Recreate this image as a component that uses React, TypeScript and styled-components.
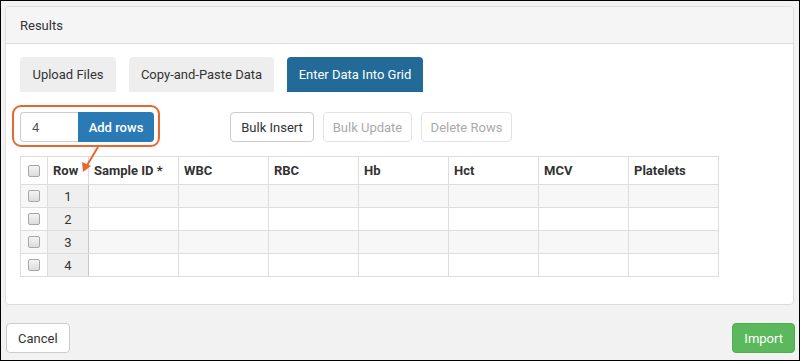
import styled, { createGlobalStyle } from 'styled-components';

const GlobalStyle = createGlobalStyle`
  html, body {
    margin: 0;
    padding: 0;
    background: #fff;
  }
  * {
    box-sizing: border-box;
  }
`;

const Frame = styled.div`
  width: 800px;
  height: 361px;
  border: 1px solid #000;
  background: #f2f2f2;
  padding: 5px 5px 0 4px;
  font-family: Roboto, 'Liberation Sans', sans-serif;
  font-size: 13px;
  color: #333;
  display: flex;
  flex-direction: column;
`;

const Panel = styled.div`
  width: 789px;
  height: 299px;
  background: #fff;
  border: 1px solid #ddd;
  border-radius: 4px;
  display: flex;
  flex-direction: column;
`;

const PanelHeader = styled.div`
  height: 37px;
  flex-shrink: 0;
  background: #f5f5f5;
  border-bottom: 1px solid #ddd;
  border-radius: 4px 4px 0 0;
  padding: 0 14px;
  display: flex;
  align-items: center;
`;

const PanelBody = styled.div`
  padding: 13px 14px 0;
  display: flex;
  flex-direction: column;
`;

const Tabs = styled.div`
  display: flex;
  gap: 13px;
`;

const Tab = styled.div<{ $active?: boolean; $width: number }>`
  width: ${(p) => p.$width}px;
  height: 35px;
  display: flex;
  align-items: center;
  justify-content: center;
  border-radius: 4px 4px 0 0;
  background: ${(p) => (p.$active ? '#226a97' : '#eee')};
  color: ${(p) => (p.$active ? '#fff' : '#333')};
`;

const Toolbar = styled.div`
  margin-top: 20px;
  height: 30px;
  display: flex;
  align-items: center;
  position: relative;
`;

const AddGroup = styled.div`
  display: flex;
  width: 134px;
  margin-right: 76px;
`;

const CountInput = styled.div`
  width: 58px;
  height: 30px;
  border: 1px solid #ccc;
  border-right: none;
  border-radius: 4px 0 0 4px;
  padding-left: 11px;
  display: flex;
  align-items: center;
  color: #555;
`;

const AddButton = styled.div`
  width: 76px;
  height: 30px;
  background: #2a7ab5;
  border-radius: 0 4px 4px 0;
  color: #fff;
  font-weight: 500;
  display: flex;
  align-items: center;
  justify-content: center;
`;

const ToolButton = styled.div<{ $disabled?: boolean; $width: number }>`
  width: ${(p) => p.$width}px;
  height: 30px;
  margin-right: 9px;
  border: 1px solid ${(p) => (p.$disabled ? '#e3e3e3' : '#ccc')};
  border-radius: 4px;
  color: ${(p) => (p.$disabled ? '#aaa' : '#333')};
  background: #fff;
  display: flex;
  align-items: center;
  justify-content: center;
`;

const Highlight = styled.div`
  position: absolute;
  left: -8px;
  top: -7px;
  width: 148px;
  height: 42px;
  border: 2px solid #e8672f;
  border-radius: 9px;
  pointer-events: none;
`;

const Arrow = styled.svg`
  position: absolute;
  left: 60px;
  top: 34px;
  overflow: visible;
`;

const Grid = styled.table`
  margin-top: 14px;
  border-collapse: collapse;
  table-layout: fixed;
  width: 699px;
`;

const HeadCell = styled.th<{ $width: number; $center?: boolean }>`
  width: ${(p) => p.$width}px;
  height: 28px;
  border: 1px solid #ddd;
  text-align: ${(p) => (p.$center ? 'center' : 'left')};
  padding: 0 5px;
  font-weight: 700;
  color: #333;
`;

const Row = styled.tr<{ $odd: boolean }>`
  background: ${(p) => (p.$odd ? '#f7f7f7' : '#fff')};
`;

const Cell = styled.td`
  height: 23px;
  border: 1px solid #ddd;
  padding: 0;
`;

const CheckCell = styled.td`
  height: 23px;
  border: 1px solid #ddd;
  text-align: center;
  padding: 0;
`;

const NumCell = styled.td`
  height: 23px;
  border: 1px solid #ddd;
  border-right-color: #c8c8c8;
  background: #efefef;
  text-align: center;
  padding: 0;
`;

const Check = styled.span`
  display: inline-block;
  width: 12px;
  height: 12px;
  border: 1px solid #a8a8a8;
  border-radius: 2px;
  background: linear-gradient(#f4f4f4, #dcdcdc);
  vertical-align: middle;
  margin-top: -2px;
`;

const Footer = styled.div`
  margin-top: 18px;
  display: flex;
  justify-content: space-between;
  width: 790px;
  padding-left: 1px;
`;

const FooterButton = styled.div<{ $primary?: boolean }>`
  height: 30px;
  padding: 0 11px;
  border: 1px solid ${(p) => (p.$primary ? '#4cae4c' : '#ccc')};
  border-radius: 4px;
  background: ${(p) => (p.$primary ? '#5cb85c' : '#fff')};
  color: ${(p) => (p.$primary ? '#fff' : '#333')};
  display: flex;
  align-items: center;
`;

const columns = ['Sample ID *', 'WBC', 'RBC', 'Hb', 'Hct', 'MCV', 'Platelets'];

export default function App() {
  return (
    <>
      <GlobalStyle />
      <Frame>
        <Panel>
          <PanelHeader>Results</PanelHeader>
          <PanelBody>
            <Tabs>
              <Tab $width={96}>Upload Files</Tab>
              <Tab $width={145}>Copy-and-Paste Data</Tab>
              <Tab $width={136} $active>
                Enter Data Into Grid
              </Tab>
            </Tabs>
            <Toolbar>
              <AddGroup>
                <CountInput>4</CountInput>
                <AddButton>Add rows</AddButton>
              </AddGroup>
              <ToolButton $width={84}>Bulk Insert</ToolButton>
              <ToolButton $width={89} $disabled>
                Bulk Update
              </ToolButton>
              <ToolButton $width={91} $disabled>
                Delete Rows
              </ToolButton>
              <Highlight />
              <Arrow width="20" height="30">
                <line x1="18" y1="1" x2="6" y2="21" stroke="#e8672f" strokeWidth="2" />
                <polygon points="3,26 2,16 11,20" fill="#e8672f" />
              </Arrow>
            </Toolbar>
            <Grid>
              <thead>
                <tr>
                  <HeadCell $width={27} $center>
                    <Check />
                  </HeadCell>
                  <HeadCell $width={41}>Row</HeadCell>
                  {columns.map((c) => (
                    <HeadCell key={c} $width={90}>
                      {c}
                    </HeadCell>
                  ))}
                </tr>
              </thead>
              <tbody>
                {[1, 2, 3, 4].map((n) => (
                  <Row key={n} $odd={n % 2 === 1}>
                    <CheckCell>
                      <Check />
                    </CheckCell>
                    <NumCell>{n}</NumCell>
                    {columns.map((c) => (
                      <Cell key={c} />
                    ))}
                  </Row>
                ))}
              </tbody>
            </Grid>
          </PanelBody>
        </Panel>
        <Footer>
          <FooterButton>Cancel</FooterButton>
          <FooterButton $primary>Import</FooterButton>
        </Footer>
      </Frame>
    </>
  );
}
